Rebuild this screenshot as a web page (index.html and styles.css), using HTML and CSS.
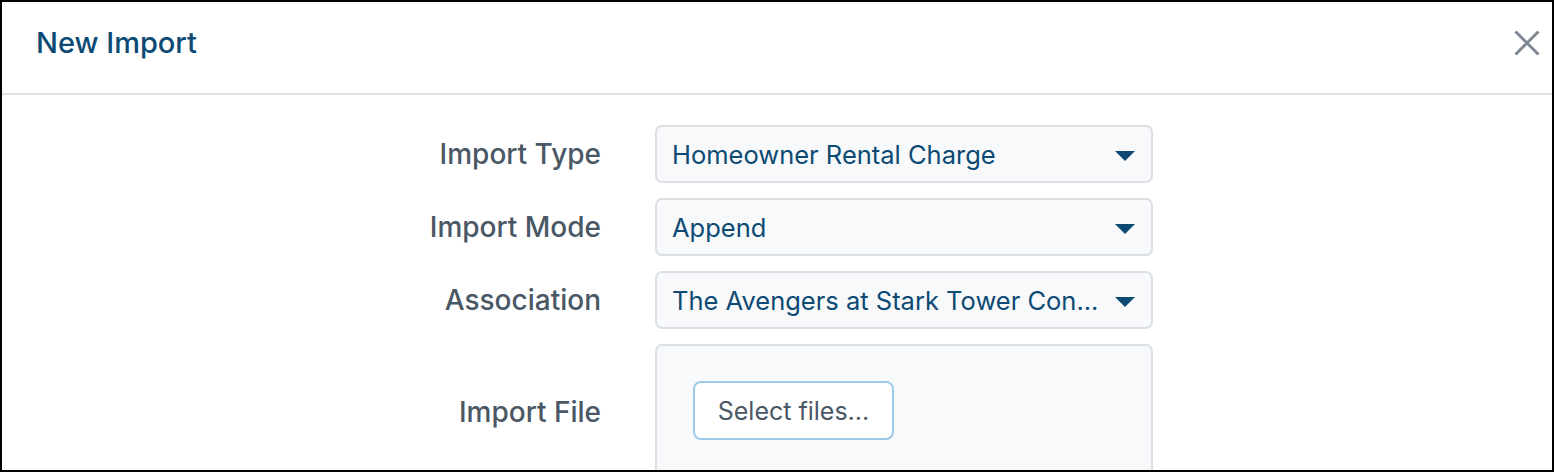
FILE: index.html
```html
<!DOCTYPE html>
<html>
<head>
<meta charset="utf-8">
<link rel="stylesheet" href="styles.css">
</head>
<body>
<div class="frame">
  <div class="header">
    <h1 class="title">New Import</h1>
    <button class="close" aria-label="Close">
      <svg width="26" height="26" viewBox="0 0 26 26"><path d="M1.5 1.5 L24.5 24.5 M24.5 1.5 L1.5 24.5" stroke="#7d8791" stroke-width="3" fill="none"/></svg>
    </button>
  </div>
  <div class="form">
    <div class="row">
      <div class="label">Import Type</div>
      <div class="select"><span class="value">Homeowner Rental Charge</span><span class="caret"></span></div>
    </div>
    <div class="row">
      <div class="label">Import Mode</div>
      <div class="select"><span class="value">Append</span><span class="caret"></span></div>
    </div>
    <div class="row">
      <div class="label">Association</div>
      <div class="select"><span class="value">The Avengers at Stark Tower Con...</span><span class="caret"></span></div>
    </div>
    <div class="row file-row">
      <div class="label">Import File</div>
      <div class="dropzone"><button class="select-btn">Select files...</button></div>
    </div>
  </div>
</div>
</body>
</html>
```

FILE: styles.css
```css
html, body {
  margin: 0;
  padding: 0;
  background: #fff;
}
body {
  font-family: Inter, "Liberation Sans", sans-serif;
}
.frame {
  box-sizing: border-box;
  width: 1554px;
  height: 472px;
  border: 2px solid #000;
  overflow: hidden;
  background: #fff;
}
.header {
  height: 93px;
  box-sizing: border-box;
  border-bottom: 2px solid #dedfe1;
  display: flex;
  align-items: center;
  justify-content: space-between;
  padding: 0 12px 0 34px;
}
.title {
  margin: 0;
  font-size: 29px;
  line-height: 36px;
  font-weight: 500;
  color: #0c4a73;
  padding-bottom: 10px;
}
.close {
  align-self: flex-start;
  margin-top: 28px;
  background: none;
  border: 0;
  padding: 0;
  width: 26px;
  height: 26px;
  display: flex;
}
.form {
  padding-top: 30px;
  display: flex;
  flex-direction: column;
  gap: 15px;
}
.row {
  display: grid;
  grid-template-columns: 599px 498px;
  column-gap: 54px;
  align-items: center;
}
.label {
  text-align: right;
  font-size: 28px;
  line-height: 34px;
  font-weight: 500;
  color: #4a5865;
}
.select {
  box-sizing: border-box;
  height: 58px;
  border: 2px solid #dcdfe3;
  border-radius: 7px;
  background: #f8f9fb;
  display: flex;
  align-items: center;
  padding: 0 16px 0 15px;
  gap: 18px;
}
.value {
  flex: 1;
  min-width: 0;
  white-space: nowrap;
  font-size: 25.5px;
  color: #0c4a73;
}
.caret {
  flex: none;
  width: 0;
  height: 0;
  border-left: 10px solid transparent;
  border-right: 10px solid transparent;
  border-top: 10px solid #0c4a73;
  margin-top: 4px;
}
.file-row .label {
  align-self: start;
  margin-top: 51px;
}
.dropzone {
  box-sizing: border-box;
  height: 160px;
  border: 2px solid #dcdfe3;
  border-radius: 7px;
  background: #f8f9fb;
  padding: 35px 0 0 36px;
}
.select-btn {
  box-sizing: border-box;
  width: 201px;
  height: 59px;
  border: 2px solid #9ccbe9;
  border-radius: 8px;
  background: #fff;
  font-family: inherit;
  font-size: 25px;
  color: #4a5865;
  padding: 0;
}
```
